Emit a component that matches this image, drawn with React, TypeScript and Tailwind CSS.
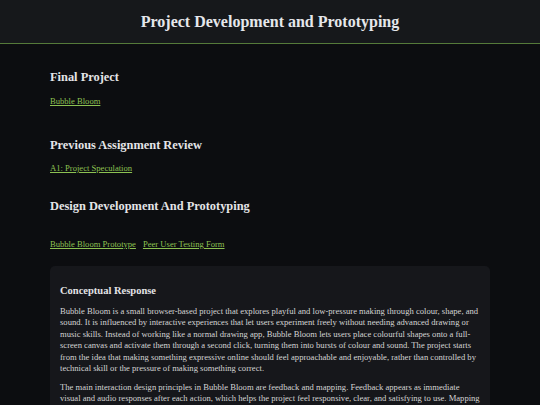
function Link({ children }: { children: React.ReactNode }) {
  return (
    <a href="#" className="text-[8.6px] leading-[12px] text-[#8cc152] underline underline-offset-1">
      {children}
    </a>
  )
}

function Heading({ children, className }: { children: React.ReactNode; className: string }) {
  return (
    <h2 className={'text-[12.4px] font-bold leading-[18px] text-[#e4e4e7] ' + className}>{children}</h2>
  )
}

export default function App() {
  return (
    <div className="h-[405px] overflow-hidden bg-[#0c0d10] text-[#d6d6d6] font-['Liberation_Serif','DejaVu_Serif',serif]">
      <header className="h-[44px] bg-[#16181b] border-b border-[#557a3a] flex items-center justify-center">
        <h1 className="text-[16px] font-bold text-[#e5e7eb]">Project Development and Prototyping</h1>
      </header>

      <main className="max-w-[440px] mx-auto">
        <Heading className="mt-[24px]">Final Project</Heading>
        <div className="mt-[9px] h-[12px] flex">
          <Link>Bubble Bloom</Link>
        </div>

        <Heading className="mt-[29px]">Previous Assignment Review</Heading>
        <div className="mt-[8px] h-[12px] flex">
          <Link>A1: Project Speculation</Link>
        </div>

        <Heading className="mt-[23px]">Design Development And Prototyping</Heading>
        <div className="mt-[23px] h-[12px] flex gap-[7px]">
          <Link>Bubble Bloom Prototype</Link>
          <Link>Peer User Testing Form</Link>
        </div>

        <div className="mt-[16px] bg-[#16171b] rounded-[5px] px-[10px] pt-[18px] pb-4">
          <h3 className="text-[10.5px] font-bold leading-[14px] text-[#e4e4e7]">Conceptual Response</h3>
          <p className="mt-[8px] text-[8.6px] leading-[11.4px] text-[#d4d4d4]">
            Bubble Bloom is a small browser-based project that explores playful and low-pressure making through colour, shape, and
            sound. It is influenced by interactive experiences that let users experiment freely without needing advanced drawing or
            music skills. Instead of working like a normal drawing app, Bubble Bloom lets users place colourful shapes onto a full-
            screen canvas and activate them through a second click, turning them into bursts of colour and sound. The project starts
            from the idea that making something expressive online should feel approachable and enjoyable, rather than controlled by
            technical skill or the pressure of making something correct.
          </p>
          <p className="mt-[7.6px] text-[8.6px] leading-[11.4px] text-[#d4d4d4]">
            The main interaction design principles in Bubble Bloom are feedback and mapping. Feedback appears as immediate
            visual and audio responses after each action, which helps the project feel responsive, clear, and satisfying to use. Mapping
            connects what the user does with what happens on screen, so every shape placed and every click made has a visible and audible result.
          </p>
        </div>
      </main>
    </div>
  )
}
